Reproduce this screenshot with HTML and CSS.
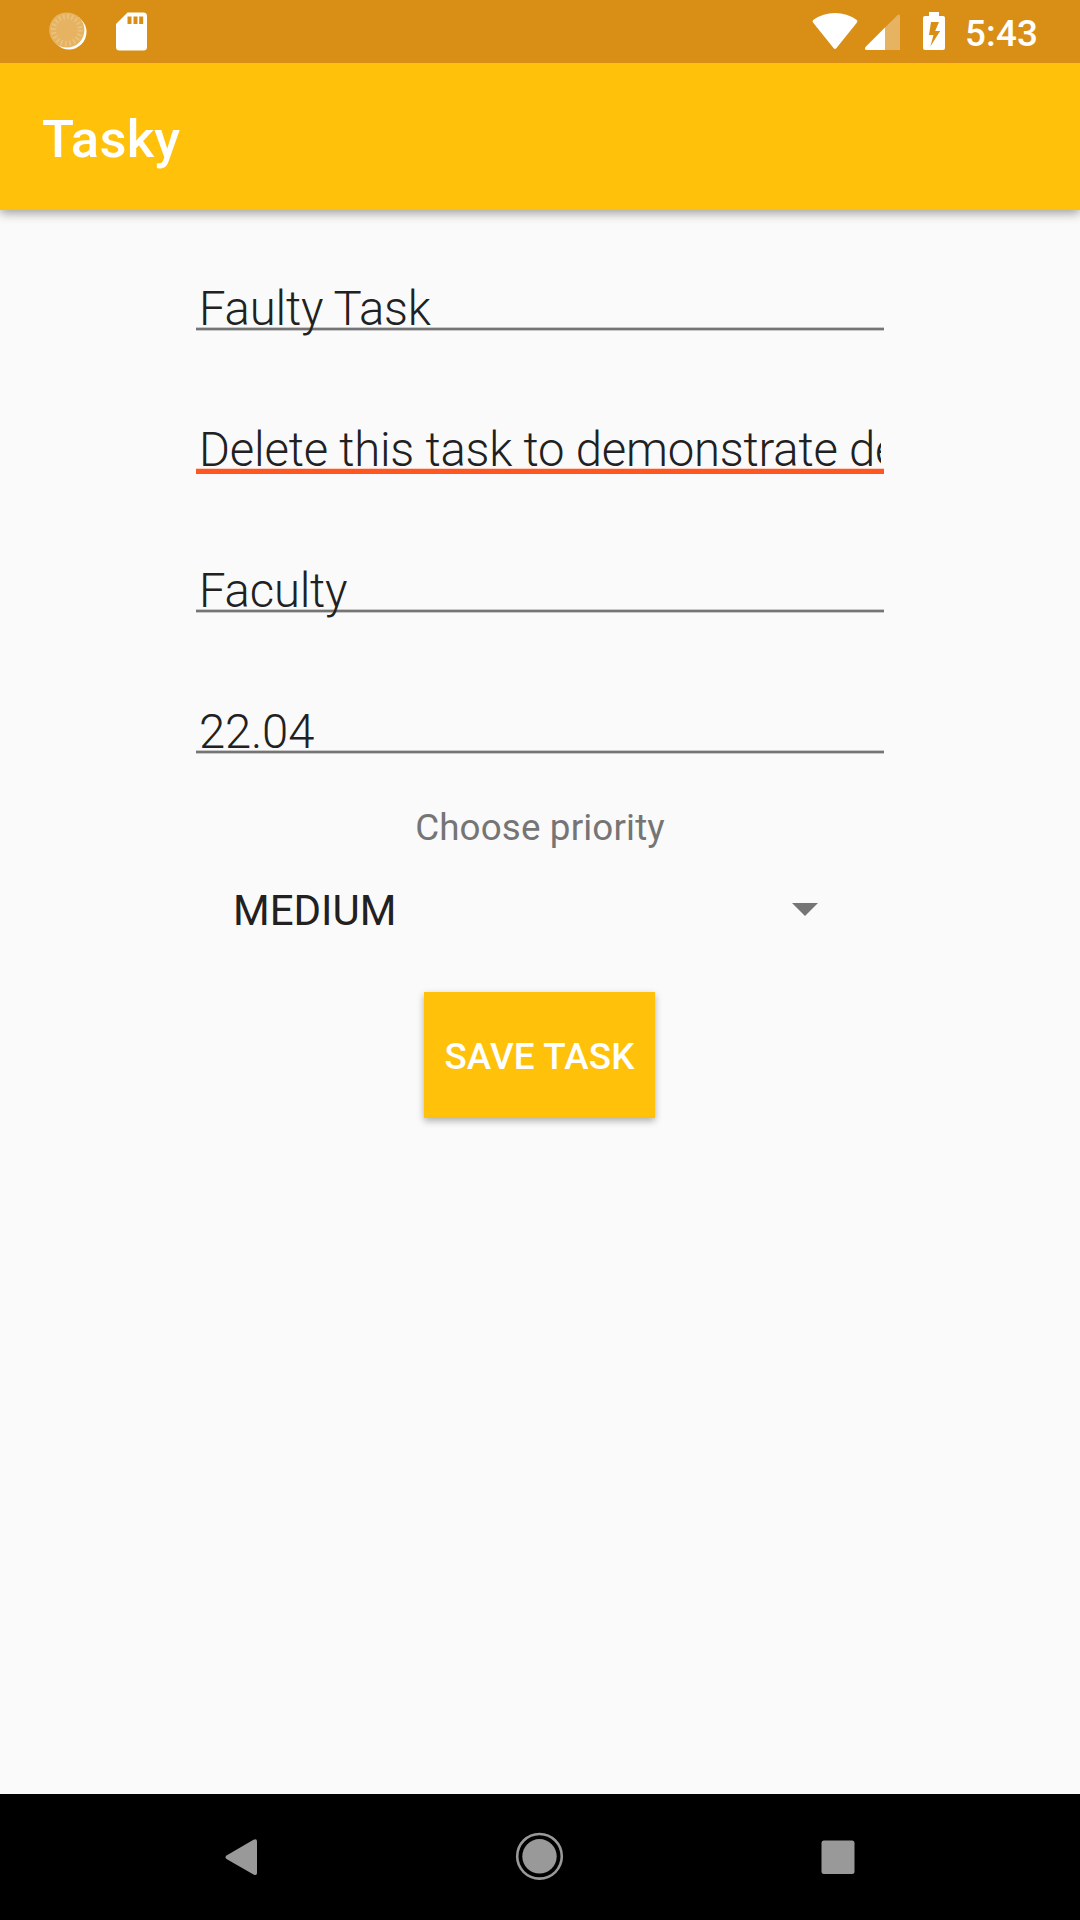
FILE: index.html
```html
<!DOCTYPE html>
<html lang="en">
<head>
<meta charset="utf-8">
<title>Tasky</title>
<link rel="stylesheet" href="styles.css">
</head>
<body>
<div class="screen">
  <div class="status-bar">
    <svg class="status-left" width="160" height="63" viewBox="0 0 160 63">
      <circle cx="69" cy="32" r="17.5" fill="#fff"/>
      <circle cx="66.8" cy="30" r="17.6" fill="#e6b362"/>
      <circle cx="66.8" cy="30" r="13.4" fill="none" stroke="#ebc37f" stroke-width="5" stroke-dasharray="1.6 2.61"/>
      <path fill="#fff" fill-rule="evenodd" d="M127.5 12.5H143.500Q147 12.500 147 16V47Q147 50.500 143.500 50.500H119.500Q116 50.500 116 47V24ZM127.500 16.500V24H131.500V16.500ZM133.500 16.500V24H137.500V16.500ZM139.200 16.500V24H143.200V16.500Z"/>
    </svg>
    <svg class="status-right" width="150" height="63" viewBox="800 0 150 63">
      <path fill="#fff" d="M813 22.500Q811.800 21 813.500 19.800Q823 13 835 13Q847 13 856.500 19.800Q858.200 21 857 22.500L836.500 48Q835 49.800 833.500 48Z"/>
      <path fill="#e6b362" d="M885 27.500L897.500 15.200Q900 13.300 900 16.500V50H885Z"/>
      <path fill="#fff" d="M885 27.500V50H866.500Q864 49.500 865.500 47Z"/>
      <path fill="#fff" fill-rule="evenodd" d="M929 12H939V16H943Q945 16 945 18V48Q945 50 943 50H925Q923 50 923 48V18Q923 16 925 16H929ZM931 22L929 35H933.500L930.300 46.500L940.200 31H935.200L939 22Z"/>
    </svg>
    <span class="clock">5:43</span>
  </div>
  <header class="app-bar">Tasky</header>
  <main class="form">
    <div class="field"><div class="value">Faulty Task</div></div>
    <div class="field focused"><div class="value">Delete this task to demonstrate deletion</div></div>
    <div class="field"><div class="value">Faculty</div></div>
    <div class="field"><div class="value">22.04</div></div>
    <div class="label">Choose priority</div>
    <div class="spinner">
      <span>MEDIUM</span>
      <svg width="26" height="13" viewBox="0 0 26 13"><path fill="#757575" d="M0 0H26L13 13Z"/></svg>
    </div>
    <button class="save">SAVE TASK</button>
  </main>
  <nav class="nav-bar">
    <svg width="1080" height="126" viewBox="0 1794 1080 126" fill="#999">
      <path d="M226.500 1855.500L253.500 1839.800Q257 1838.300 257 1841.500V1873Q257 1876.200 253.500 1874.500L226.500 1859Q224.300 1857.300 226.500 1855.500Z"/>
      <circle cx="539.500" cy="1856.300" r="17.200"/>
      <circle cx="539.500" cy="1856.300" r="22.300" fill="none" stroke="#999" stroke-width="2.600"/>
      <rect x="821.500" y="1840.500" width="33" height="33.500" rx="2.500"/>
    </svg>
  </nav>
</div>
</body>
</html>
```
FILE: styles.css
```css
body {
  margin: 0;
  font-family: Roboto, sans-serif;
  background: #fafafa;
}

.screen {
  width: 1080px;
  height: 1920px;
  display: flex;
  flex-direction: column;
  overflow: hidden;
}

.status-bar {
  position: relative;
  z-index: 1;
  height: 63px;
  flex: none;
  display: flex;
  background: #d98f16;
}

.status-right {
  margin-left: 640px;
}

.clock {
  margin-left: 15px;
  color: #fff;
  font-size: 36.75px;
  font-weight: 500;
  letter-spacing: 0.2px;
  line-height: 68px;
}

.app-bar {
  height: 147px;
  flex: none;
  box-sizing: border-box;
  padding-left: 42px;
  background: #ffc10a;
  box-shadow: 0 3px 10px rgba(0, 0, 0, 0.38);
  color: #fff;
  font-size: 52.5px;
  font-weight: 500;
  letter-spacing: 0.25px;
  line-height: 152px;
}

.form {
  flex: 1;
  display: flex;
  flex-direction: column;
  align-items: center;
  padding-top: 71px;
}

.field {
  width: 688px;
  height: 141px;
  flex: none;
  box-sizing: border-box;
  padding: 0 3px;
  background: linear-gradient(#c8c8c8 1px, #757575 1px 3px, #c8c8c8 3px) 0 46px / 100% 4px no-repeat;
}

.focused {
  background: linear-gradient(#ffd0c0 1px, #ff5722 1px) 0 46px / 100% 6px no-repeat;
}

.value {
  color: #212121;
  font-size: 47.25px;
  font-weight: 300;
  letter-spacing: -0.2px;
  line-height: 56px;
  white-space: nowrap;
  overflow-x: clip;
}

.label {
  height: 50px;
  margin-top: -43px;
  color: #757575;
  font-size: 36.75px;
  letter-spacing: 0.15px;
  line-height: 52px;
}

.spinner {
  width: 585px;
  height: 60px;
  margin: 28px 0 0 -29px;
  display: flex;
  align-items: center;
  justify-content: space-between;
  color: #212121;
  font-size: 42px;
  line-height: 60px;
}

.spinner span {
  padding-top: 2px;
}

.spinner svg {
  margin-bottom: 1px;
}

.save {
  width: 231px;
  height: 126px;
  margin: 52px 0 0 -1px;
  padding: 2px 0 0;
  border: 0;
  background: #ffc10a;
  box-shadow: 0 3px 7px rgba(0, 0, 0, 0.3);
  color: #fff;
  font-family: inherit;
  font-size: 36.75px;
  font-weight: 500;
  letter-spacing: 0.2px;
  line-height: 126px;
}

.nav-bar {
  height: 126px;
  flex: none;
  background: #000;
}
```
